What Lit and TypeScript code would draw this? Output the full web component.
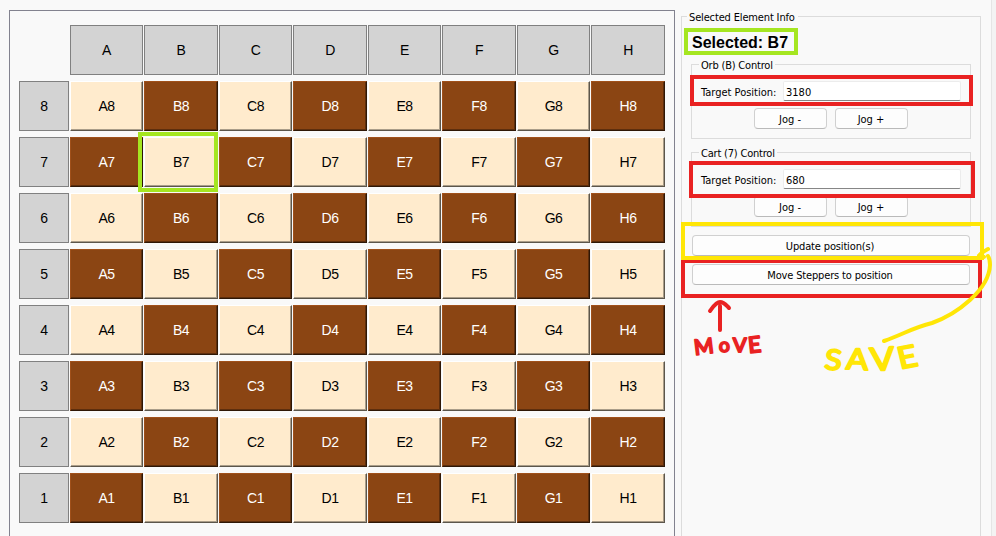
import { LitElement, html, css, svg } from "lit";
import { customElement, property } from "lit/decorators.js";

const FILES = ["A", "B", "C", "D", "E", "F", "G", "H"];
const RANKS = [8, 7, 6, 5, 4, 3, 2, 1];

@customElement("board-grid")
class BoardGrid extends LitElement {
  static styles = css`
    :host { display: block; box-sizing: border-box; width: 666px; height: 540px; border: 1px solid #82828f; padding: 14px 9px; }
    .grid {
      display: grid;
      grid-template-columns: 50px 73px 74px 73px 74px 73px 74px 73px 74px;
      column-gap: 1px;
      grid-auto-rows: 50px;
      row-gap: 6px;
      font: 14px "Liberation Sans", Arial, sans-serif;
      letter-spacing: -0.5px;
      color: #000;
    }
    .grid > div { box-sizing: border-box; display: flex; align-items: center; justify-content: center; }
    .head { background: #d3d3d3; border: 1px solid #808080; }
    .cell { border: 1px solid; }
    .light { background: #ffebcd; border-color: #fff #5c564b #5c564b #fff; box-shadow: inset -1px -1px #aa9d89; }
    .dark { background: #8b4513; color: #fff; border-color: #a0501a #2e1706 #2e1706 #a0501a; box-shadow: inset -1px -1px #5d2e0d; }
  `;
  render() {
    return html`<div class="grid">
      <div></div>
      ${FILES.map((f) => html`<div class="head">${f}</div>`)}
      ${RANKS.map(
        (r, i) => html`<div class="head">${r}</div>
          ${FILES.map((f, j) => html`<div class="cell ${(i + j) % 2 ? "dark" : "light"}">${f}${r}</div>`)}`
      )}
    </div>`;
  }
}

@customElement("axis-control")
class AxisControl extends LitElement {
  @property() label = "";
  @property() value = "";
  static styles = css`
    :host { display: block; box-sizing: border-box; height: 75px; border: 1px solid #dcdcdc; padding: 16px 9px 0 9px; }
    .title { width: max-content; height: 14px; line-height: 16px; margin: -23px 0 9px -2px; padding: 0 2px; background: #f9f9f9; letter-spacing: var(--ls); }
    .row { display: flex; align-items: center; height: 20px; }
    .name { width: 82px; letter-spacing: 0; white-space: nowrap; padding-top: 3px; }
    .input { box-sizing: border-box; flex: 1; height: 20px; line-height: 21px; padding-left: 2px; background: #fff; border: 1px solid #ececec; border-bottom-color: #868686; border-radius: 2px; }
    .jogs { display: flex; gap: 8px; justify-content: center; margin: 7px 1px 0 0; }
    .btn { box-sizing: border-box; width: 73px; height: 21px; line-height: 21px; text-align: center; background: #fdfdfd; border: 1px solid #d0d0d0; border-bottom-color: #bababa; border-radius: 4px; }
  `;
  render() {
    return html`<div class="title">${this.label}</div>
      <div class="row"><div class="name">Target Position:</div><div class="input">${this.value}</div></div>
      <div class="jogs"><div class="btn">Jog -</div><div class="btn">Jog +</div></div>`;
  }
}

@customElement("app-root")
class AppRoot extends LitElement {
  static styles = css`
    :host {
      --ls: -0.2px;
      display: flex; position: relative; box-sizing: border-box; width: 996px; height: 536px; overflow: hidden;
      padding: 10px 0 0 9px; background: #f9f9f9; color: #000;
      font: 11px "DejaVu Sans Condensed", "DejaVu Sans", sans-serif; font-stretch: condensed;
    }
    board-grid { flex: none; }
    .info { flex: none; box-sizing: border-box; width: 300px; height: 540px; margin: 6px 10px 0 6px; border: 1px solid #dcdcdc; padding: 0 9px; }
    .title { width: max-content; height: 14px; line-height: 15px; margin: -7px 0 0 -4px; padding: 0 3px 0 2px; background: #f9f9f9; letter-spacing: -0.15px; }
    .selected { height: 20px; margin: 9px 0 11px 1px; font: bold 16px/20px "Liberation Sans", Arial, sans-serif; }
    axis-control + axis-control { margin-top: 13px; }
    .btn { box-sizing: border-box; height: 21px; line-height: 21px; margin: 8px 1px 0; padding-right: 2px; text-align: center; letter-spacing: -0.15px; background: #fdfdfd; border: 1px solid #d0d0d0; border-bottom-color: #bababa; border-radius: 4px; }
    .edge { flex: none; width: 4px; height: 536px; margin-top: -10px; border-left: 1px solid #e5e5e5; background: #f3f3f3; }
    .marks { position: absolute; left: 0; top: 0; }
    .line { fill: none; stroke-width: 4; stroke-linecap: round; stroke-linejoin: round; }
    .box { fill: none; stroke-width: 4; }
    .red { stroke: #e92222; }
    .green { stroke: #a5e621; }
    .yellow { stroke: #ffe606; }
    .note { font-family: Lato, sans-serif; font-weight: 400; stroke-width: 2; stroke-linejoin: round; stroke-linecap: round; }
    .note.red { fill: #e92222; }
    .note.yellow { fill: #ffe606; }
  `;
  render() {
    return html`
      <board-grid></board-grid>
      <section class="info">
        <div class="title">Selected Element Info</div>
        <div class="selected">Selected: B7</div>
        <axis-control label="Orb (B) Control" value="3180"></axis-control>
        <axis-control label="Cart (7) Control" value="680"></axis-control>
        <div class="btn">Update position(s)</div>
        <div class="btn">Move Steppers to position</div>
      </section>
      <div class="edge"></div>
      ${this.marks()}
    `;
  }
  marks() {
    return html`<svg class="marks" width="996" height="536" viewBox="0 0 996 536">
      ${svg`
      <rect class="box green" x="140" y="134" width="76" height="56"/>
      <rect class="box green" x="686" y="30" width="110" height="23"/>
      <rect class="box red" x="692" y="77" width="279" height="27"/>
      <rect class="box red" x="691" y="163" width="282" height="33"/>
      <rect class="box red" x="683" y="261" width="297" height="35"/>
      <rect class="box yellow" x="683" y="224" width="299" height="34"/>
      <path class="line red" d="M720 330V306M710 311C713 307 716 302 720 302S726 305 729 308"/>
      <path class="line yellow" d="M884 341C904 334 912 328 932 323C957 314 989 290 990 265Q990 259 988 256M988 249Q982 252 979 255.500L984 257"/>
      <text class="note red">
        <tspan x="695" y="355" rotate="-7" font-size="21">M</tspan><tspan x="719" y="352" font-size="19">o</tspan><tspan x="733" y="352" font-size="20">V</tspan><tspan x="749" y="353" rotate="-6" font-size="22">E</tspan>
      </text>
      <text class="note yellow" transform="translate(824 370) scale(1.12 1)">
        <tspan x="0" y="-1" rotate="5" font-size="28">S</tspan><tspan x="19.500" y="-1" rotate="3" font-size="29">A</tspan><tspan x="42" y="1" rotate="-4" font-size="32">V</tspan><tspan x="68" y="-1" rotate="-12" font-size="30">E</tspan>
      </text>`}
    </svg>`;
  }
}
